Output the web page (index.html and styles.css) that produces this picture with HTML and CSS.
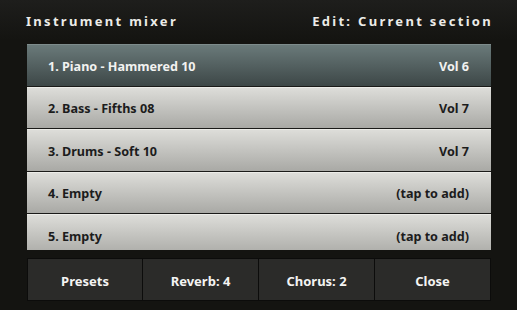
FILE: index.html
```html
<!DOCTYPE html>
<html lang="en">
<head>
    <meta charset="UTF-8">
    <meta name="viewport" content="width=device-width, initial-scale=1.0">
    <title>Instrument mixer</title>
    <link rel="stylesheet" href="styles.css">
</head>
<body>
    <main>
        <header class="top-bar">
            <h1>Instrument mixer</h1>
            <h2>Edit: Current section</h2>
        </header>
        <section class="track-list">
            <div class="track selected">
                <span>1. Piano - Hammered 10</span>
                <span>Vol 6</span>
            </div>
            <div class="track">
                <span>2. Bass - Fifths 08</span>
                <span>Vol 7</span>
            </div>
            <div class="track">
                <span>3. Drums - Soft 10</span>
                <span>Vol 7</span>
            </div>
            <div class="track">
                <span>4. Empty</span>
                <span>(tap to add)</span>
            </div>
            <div class="track">
                <span>5. Empty</span>
                <span>(tap to add)</span>
            </div>
        </section>
        <section class="buttons">
            <button>Presets</button>
            <button>Reverb: 4</button>
            <button>Chorus: 2</button>
            <button>Close</button>
        </section>
    </main>
</body>
</html>
```

FILE: styles.css
```css
body{
    margin: 0;
    background-color: #141411;
    font-family: "Noto Sans", "Open Sans", sans-serif;
}

main{
    width: 517px;
    height: 310px;
    background: linear-gradient(#1e1e1c, #141411 40px);
}

.top-bar{
    display: flex;
    justify-content: space-between;
    align-items: center;
    height: 44px;
    padding: 0 24px 0 26px;
    box-sizing: border-box;
}

.top-bar h1,
.top-bar h2{
    margin: 0;
    font-size: 13px;
    font-weight: bold;
    color: #ecece8;
    letter-spacing: 2.3px;
    padding-bottom: 2px;
}

.track-list{
    margin: 0 26px 0 27px;
    height: 206px;
    overflow: hidden;
}

.track{
    display: flex;
    justify-content: space-between;
    align-items: center;
    height: 42.5px;
    padding: 3px 22px 0 21px;
    box-sizing: border-box;
    border-bottom: 1px solid #1a1a18;
    background: linear-gradient(#dededa, #a9a9a5);
    box-shadow: inset 0 1px 0 #ecece8;
    color: #1c1c1c;
    font-size: 12.6px;
    font-weight: bold;
}

.track.selected{
    background: linear-gradient(#6b7b7b, #3d4747);
    box-shadow: inset 0 1px 0 #7e8c8c;
    color: #f2f2f0;
}

.buttons{
    display: grid;
    grid-template-columns: repeat(4, 1fr);
    margin: 8px 26px 0 27px;
    height: 43px;
}

.buttons button{
    background-color: #2b2b29;
    border: 1px solid #0c0c0b;
    margin-left: -1px;
    color: #f4f4f2;
    font-family: "Noto Sans", "Open Sans", sans-serif;
    font-size: 13px;
    font-weight: bold;
    padding: 3px 0 0;
}

.buttons button:first-child{
    margin-left: 0;
}
```
